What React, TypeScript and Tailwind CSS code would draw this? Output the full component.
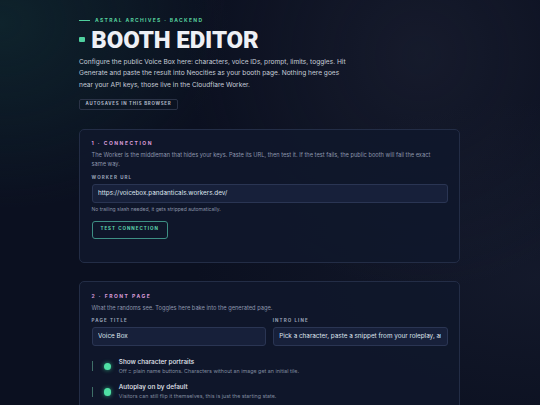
const sans = "font-['Inter','Liberation_Sans',sans-serif]";

function Field({ label, value }: { label: string; value: string }) {
  return (
    <div className="flex min-w-0 flex-1 flex-col">
      <div className="mb-[3px] text-[4.5px] font-bold uppercase leading-[6px] tracking-[1.1px] text-[#9aa3b8]">{label}</div>
      <div className="flex h-[18.3px] items-center rounded-[3px] border border-[#2a3553] bg-[#17203a] px-[5.5px]">
        <div className="min-w-0 flex-1 overflow-hidden whitespace-nowrap text-[6.35px] text-[#dfe4ee]">{value}</div>
      </div>
    </div>
  );
}

function ToggleRow({ title, sub }: { title: string; sub: string }) {
  return (
    <div className="flex items-center">
      <div className="h-[10px] w-[1.5px] bg-[#3f6f68]" />
      <div className="ml-[10.8px] h-[7.4px] w-[7.4px] rounded-full bg-[#4fe0a4] shadow-[0_0_4px_#2fa57a]" />
      <div className="ml-[7.6px] flex flex-col">
        <div className="text-[6.4px] font-medium leading-[9px] text-[#e4e8f0]">{title}</div>
        <div className="text-[5.35px] leading-[8px] text-[#7f899e]">{sub}</div>
      </div>
    </div>
  );
}

function Card({
  num,
  title,
  desc,
  children,
}: {
  num: string;
  title: string;
  desc: string;
  children: React.ReactNode;
}) {
  return (
    <section className="rounded-[5px] border border-[#232d46] bg-[#0f172b]/90 px-[11.5px] pt-[10.8px]">
      <div className="text-[5px] font-bold uppercase leading-[7px] tracking-[1.5px] text-[#d99bd9]">
        {num} · {title}
      </div>
      <p className="mt-[2.5px] max-w-[346px] text-[5.7px] leading-[9.4px] text-[#8c95aa]">{desc}</p>
      {children}
    </section>
  );
}

export default function App() {
  return (
    <div
      className={`${sans} min-h-screen w-full overflow-hidden bg-[#0b1020] bg-[radial-gradient(ellipse_at_0%_5%,rgba(18,58,58,0.45),transparent_30%),radial-gradient(circle_at_78%_12%,rgba(42,46,66,0.35),transparent_40%),radial-gradient(ellipse_at_100%_60%,rgba(30,36,56,0.45),transparent_45%)] px-[79px] pb-[40px] pt-[16.3px]`}
    >
      {/* header */}
      <div className="flex items-center gap-[5px]">
        <div className="h-[1px] w-[11px] bg-[#4fcf9c]" />
        <span className="text-[5px] font-bold uppercase leading-[8px] tracking-[1.3px] text-[#55cf9d]">
          Astral Archives · Backend
        </span>
      </div>
      <div className="mt-[1.4px] flex items-center gap-[6.5px]">
        <div className="h-[5.6px] w-[5.8px] rounded-[1px] bg-[#4fd19f]" />
        <h1 className="font-['Roboto',sans-serif] text-[24px] font-black leading-[28px] tracking-[-0.1px] text-[#eef0f5]">
          BOOTH EDITOR
        </h1>
      </div>
      <p className="mt-[3.3px] w-[268px] text-[6.6px] leading-[11.3px] text-[#c6ccd8]">
        Configure the public Voice Box here: characters, voice IDs, prompt, limits, toggles. Hit Generate and paste the
        result into Neocities as your booth page. Nothing here goes near your API keys, those live in the Cloudflare
        Worker.
      </p>
      <div className="mt-[7.8px] flex h-[11.7px] w-fit items-center rounded-[2px] border border-[#2b3347] px-[5.5px] text-[4.4px] font-bold uppercase tracking-[0.75px] text-[#aeb6c6]">
        Autosaves in this browser
      </div>

      <div className="mt-[18.3px] flex w-[381px] flex-col gap-[18.4px]">
        <Card
          num="1"
          title="Connection"
          desc="The Worker is the middleman that hides your keys. Paste its URL, then test it. If the test fails, the public booth will fail the exact same way."
        >
          <div className="mt-[6.6px]">
            <Field label="Worker URL" value="https://voicebox.pandanticals.workers.dev/" />
          </div>
          <div className="mt-[2.7px] text-[5px] leading-[8px] text-[#8a93a7]">
            No trailing slash needed, it gets stripped automatically.
          </div>
          <button className="mb-[23px] mt-[7.3px] flex h-[18.4px] w-[76.4px] items-center justify-center rounded-[3px] border border-[#3e8f84] text-[4.5px] font-bold uppercase tracking-[1px] text-[#5fd6b0]">
            Test connection
          </button>
        </Card>

        <Card num="2" title="Front page" desc="What the randoms see. Toggles here bake into the generated page.">
          <div className="mt-[6.3px] flex gap-[6.3px]">
            <Field label="Page title" value="Voice Box" />
            <Field label="Intro line" value="Pick a character, paste a snippet from your roleplay, and hear it read aloud." />
          </div>
          <div className="mt-[12.2px] flex flex-col gap-[8.5px] pb-[20px]">
            <ToggleRow
              title="Show character portraits"
              sub="Off = plain name buttons. Characters without an image get an initial tile."
            />
            <ToggleRow
              title="Autoplay on by default"
              sub="Visitors can still flip it themselves, this is just the starting state."
            />
          </div>
        </Card>
      </div>
    </div>
  );
}
